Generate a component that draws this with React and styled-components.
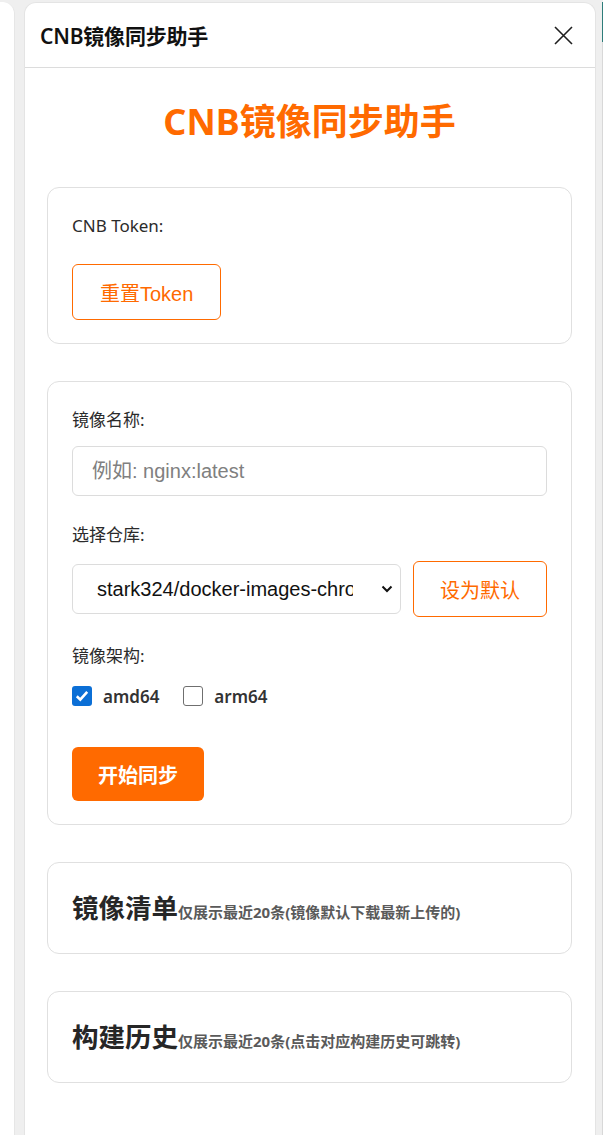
import styled, { createGlobalStyle } from "styled-components";

const GlobalStyle = createGlobalStyle`
  html, body {
    margin: 0;
    padding: 0;
    background: #efefef;
    font-family: "Noto Sans", "Noto Sans CJK SC", sans-serif;
  }
  * { box-sizing: border-box; }
`;

const ORANGE = "#ff6a00";

export default function App() {
  return (
    <>
      <GlobalStyle />
      <Page>
        <LeftStub />
        <Panel>
          <Header>
            <HeaderTitle>CNB镜像同步助手</HeaderTitle>
            <CloseButton aria-label="close">
              <svg width="19" height="19" viewBox="0 0 19 19">
                <path d="M1 1 L18 18 M18 1 L1 18" stroke="#1f1f1f" strokeWidth="1.6" fill="none" />
              </svg>
            </CloseButton>
          </Header>

          <Body>
            <MainTitle>CNB镜像同步助手</MainTitle>

            <Card>
              <Label>CNB Token:</Label>
              <div>
                <OutlineButton>重置Token</OutlineButton>
              </div>
            </Card>

            <Card>
              <Field>
                <Label>镜像名称:</Label>
                <TextInput placeholder="例如: nginx:latest" />
              </Field>

              <Field>
                <Label>选择仓库:</Label>
                <SelectRow>
                  <SelectWrap>
                    <Select defaultValue="a">
                      <option value="a">stark324/docker-images-chrome</option>
                    </Select>
                    <Chevron width="12" height="8" viewBox="0 0 12 8">
                      <path d="M1.5 1.5 L6 6 L10.5 1.5" stroke="#111" strokeWidth="2" fill="none" />
                    </Chevron>
                  </SelectWrap>
                  <OutlineButton $pad={26}>设为默认</OutlineButton>
                </SelectRow>
              </Field>

              <Field>
                <Label $gap={16}>镜像架构:</Label>
                <CheckRow>
                  <CheckItem>
                    <Box $checked>
                      <svg width="14" height="12" viewBox="0 0 14 12">
                        <path d="M1.8 6.2 L5.3 9.6 L12.2 1.8" stroke="#fff" strokeWidth="2.6" fill="none" />
                      </svg>
                    </Box>
                    amd64
                  </CheckItem>
                  <CheckItem>
                    <Box />
                    arm64
                  </CheckItem>
                </CheckRow>
              </Field>

              <div>
                <PrimaryButton>开始同步</PrimaryButton>
              </div>
            </Card>

            <Card $compact>
              <SectionTitle>
                镜像清单<SectionNote>仅展示最近20条(镜像默认下载最新上传的)</SectionNote>
              </SectionTitle>
            </Card>

            <Card $compact>
              <SectionTitle>
                构建历史<SectionNote>仅展示最近20条(点击对应构建历史可跳转)</SectionNote>
              </SectionTitle>
            </Card>
          </Body>
        </Panel>
        <RightStub />
      </Page>
    </>
  );
}

const Page = styled.div`
  display: flex;
  min-height: 100vh;
  padding-top: 2px;
`;

const LeftStub = styled.div`
  width: 15px;
  background: #fff;
  border-top-right-radius: 12px;
  border-right: 1px solid #e6e6e6;
`;

const Panel = styled.div`
  margin-left: 9px;
  width: 572px;
  background: #fff;
  border: 1px solid #e4e4e4;
  border-bottom: none;
  border-radius: 12px 12px 0 0;
  display: flex;
  flex-direction: column;
`;

const RightStub = styled.div`
  margin-left: auto;
  width: 1px;
  background: linear-gradient(#2e7d7a 0 40px, #d8d8d8 40px 100%);
`;

const Header = styled.div`
  height: 65px;
  display: flex;
  align-items: center;
  justify-content: space-between;
  padding: 0 22px 0 15px;
  border-bottom: 1px solid #dcdcdc;
`;

const HeaderTitle = styled.div`
  font-size: 21px;
  font-weight: 600;
  color: #111;
  letter-spacing: -0.2px;
`;

const CloseButton = styled.button`
  border: none;
  background: none;
  padding: 0;
  display: flex;
  cursor: pointer;
`;

const Body = styled.div`
  padding: 32px 23px 30px 22px;
  display: flex;
  flex-direction: column;
  gap: 37px;
`;

const MainTitle = styled.h1`
  margin: 0 0 6px;
  text-align: center;
  font-size: 36px;
  line-height: 44px;
  font-weight: 700;
  color: ${ORANGE};
`;

const Card = styled.div`
  border: 1px solid #e0e0e0;
  border-radius: 12px;
  padding: ${(p) => (p.$compact ? "24px 24px" : "26px 24px 23px")};
  display: flex;
  flex-direction: column;
`;

const Field = styled.div`
  display: flex;
  flex-direction: column;
  margin-bottom: 27px;
`;

const Label = styled.div`
  font-size: 17px;
  line-height: 24px;
  color: #2b2b2b;
  font-weight: 400;
  margin-bottom: ${(p) => p.$gap ?? 14}px;
  ${Card} > & { margin-bottom: 26px; }
`;

const ControlText = `
  font-family: "Liberation Sans", "Noto Sans CJK SC", sans-serif;
  font-size: 20px;
`;

const OutlineButton = styled.button`
  ${ControlText}
  height: 56px;
  padding: 0 ${(p) => p.$pad ?? 27}px;
  background: #fff;
  color: ${ORANGE};
  border: 1px solid ${ORANGE};
  border-radius: 6px;
  cursor: pointer;
  white-space: nowrap;
`;

const PrimaryButton = styled.button`
  ${ControlText}
  margin-top: 12px;
  height: 54px;
  padding: 0 26px;
  background: ${ORANGE};
  color: #fff;
  font-weight: 700;
  border: none;
  border-radius: 6px;
  cursor: pointer;
`;

const TextInput = styled.input`
  ${ControlText}
  height: 50px;
  padding: 0 19px;
  border: 1px solid #dcdcdc;
  border-radius: 6px;
  color: #333;
  outline: none;
  &::placeholder { color: #808080; }
`;

const SelectRow = styled.div`
  display: flex;
  align-items: center;
  gap: 12px;
`;

const SelectWrap = styled.div`
  position: relative;
  flex: 1;
  min-width: 0;
`;

const Select = styled.select`
  ${ControlText}
  appearance: none;
  width: 100%;
  height: 50px;
  padding: 0 47px 0 24px;
  border: 1px solid #dcdcdc;
  border-radius: 6px;
  background: #fff;
  color: #111;
  outline: none;
`;

const Chevron = styled.svg`
  position: absolute;
  right: 8px;
  top: 21px;
  pointer-events: none;
`;

const CheckRow = styled.div`
  display: flex;
  align-items: center;
  gap: 24px;
  height: 24px;
`;

const CheckItem = styled.label`
  display: flex;
  align-items: center;
  gap: 11px;
  font-size: 17px;
  font-weight: 600;
  color: #333;
  cursor: pointer;
`;

const Box = styled.span`
  width: 20px;
  height: 20px;
  border-radius: 3px;
  display: flex;
  align-items: center;
  justify-content: center;
  background: ${(p) => (p.$checked ? "#0b6fd6" : "#fff")};
  border: ${(p) => (p.$checked ? "none" : "1.5px solid #6f6f6f")};
`;

const SectionTitle = styled.div`
  height: 42px;
  display: flex;
  align-items: baseline;
  padding-top: 1px;
  font-size: 26.5px;
  line-height: 40px;
  font-weight: 700;
  color: #262626;
  white-space: nowrap;
`;

const SectionNote = styled.span`
  font-size: 15px;
  line-height: 1;
  font-weight: 700;
  color: #5a5a5a;
`;
